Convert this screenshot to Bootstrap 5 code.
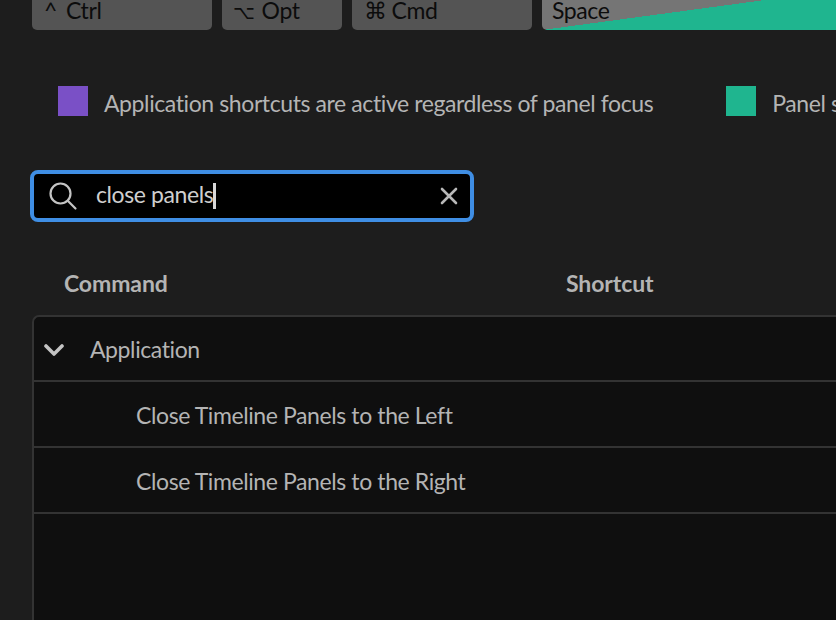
<!DOCTYPE html>
<html lang="en">
<head>
    <meta charset="UTF-8">
    <title>Keyboard Shortcuts</title>
    <link href="https://cdn.jsdelivr.net/npm/bootstrap@5.3.3/dist/css/bootstrap.min.css" rel="stylesheet">
    <style>
        html, body { height: 100%; }
        body {
            background: #1d1d1d;
            color: #b4b4b4;
            font-family: "Lato", "Noto Sans", sans-serif;
            font-size: 23px;
            letter-spacing: -0.4px;
            overflow: hidden;
        }
        .shell { width: 836px; height: 620px; overflow: hidden; }
        .key-row { height: 30px; padding-left: 32px; gap: 10px; }
        .key-cap {
            background: #545454;
            color: #0c0c0c;
            height: 30px;
            border-radius: 0 0 5px 5px;
            padding-left: 12px;
            line-height: 21px;
            flex: none;
            white-space: nowrap;
        }
        .key-sym { display: inline-block; margin-right: 9px; }
        .key-ctrl { width: 180px; }
        .key-opt { width: 120px; }
        .key-opt .key-sym { font-size: 19px; margin-left: -1px; margin-right: 7px; }
        .key-cmd { width: 180px; }
        .key-cmd .key-sym { margin-right: 5px; }
        .key-space {
            width: 320px;
            padding-left: 10px;
            background-color: #1fb58f;
            background-image: linear-gradient(to bottom right, #757575 50%, #1fb58f 50%);
            background-size: 223px 30px;
            background-repeat: no-repeat;
        }
        .legend-row { height: 30px; margin-top: 56px; padding-left: 58px; }
        .swatch { width: 30px; height: 30px; flex: none; }
        .swatch-app { background: #7a50c6; }
        .swatch-panel { background: #1fb58f; }
        .legend-text { margin-left: 16px; white-space: nowrap; line-height: 34px; height: 30px; }
        .legend-gap { margin-left: 73px; }
        .search-box {
            width: 444px;
            height: 52px;
            margin: 54px 0 0 30px;
            background: #000;
            border: 4px solid #3f8ee4;
            border-radius: 8px;
            padding: 0 12px 0 14px;
            color: #cfcfcf;
        }
        .search-val { margin-left: 18px; line-height: 1; flex-grow: 1; }
        .caret-bar { display: inline-block; width: 3px; height: 26px; background: #d8d8d8; vertical-align: -6px; }
        .col-heads { height: 40px; margin-top: 41px; padding-left: 64px; font-weight: 700; color: #b4b4b4; letter-spacing: -0.1px; }
        .head-cmd { width: 502px; }
        .cmd-panel {
            width: 820px;
            height: 320px;
            margin: 12px 0 0 32px;
            background: #0f0f0f;
            border: 2px solid #333;
            border-right: 0;
            border-bottom: 0;
            border-radius: 7px 0 0 0;
        }
        .cmd-row { height: 66px; border-bottom: 2px solid #333; white-space: nowrap; }
        .cmd-group { padding: 2px 0 0 10px; height: 65px; }
        .cmd-group span { margin-left: 26px; }
        .cmd-item { padding-left: 102px; padding-top: 2px; }
    </style>
</head>
<body>
    <div class="shell">
        <div class="d-flex key-row">
            <div class="key-cap key-ctrl"><span class="key-sym">^</span>Ctrl</div>
            <div class="key-cap key-opt"><span class="key-sym">⌥</span>Opt</div>
            <div class="key-cap key-cmd"><span class="key-sym">⌘</span>Cmd</div>
            <div class="key-cap key-space">Space</div>
        </div>

        <div class="d-flex legend-row">
            <div class="swatch swatch-app"></div>
            <div class="legend-text">Application shortcuts are active regardless of panel focus</div>
            <div class="swatch swatch-panel legend-gap"></div>
            <div class="legend-text">Panel shortcuts are active only when the panel has focus</div>
        </div>

        <div class="search-box d-flex align-items-center">
            <svg width="30" height="30" viewBox="0 0 30 30" fill="none" stroke="#c4c4c4" stroke-width="2.2" stroke-linecap="round">
                <circle cx="12.5" cy="12.5" r="10"/>
                <path d="M20 20 L27.5 27.5"/>
            </svg>
            <div class="search-val">close panels<span class="caret-bar"></span></div>
            <svg width="18" height="18" viewBox="0 0 18 18" fill="none" stroke="#b8b8b8" stroke-width="2.6" stroke-linecap="round">
                <path d="M2 2 L16 16 M16 2 L2 16"/>
            </svg>
        </div>

        <div class="d-flex align-items-center col-heads">
            <div class="head-cmd">Command</div>
            <div>Shortcut</div>
        </div>

        <div class="cmd-panel">
            <div class="cmd-row cmd-group d-flex align-items-center">
                <svg width="20" height="14" viewBox="0 0 20 14" fill="none" stroke="#c4c4c4" stroke-width="3.6" stroke-linecap="round" stroke-linejoin="round">
                    <path d="M2 3 L10 11 L18 3"/>
                </svg>
                <span>Application</span>
            </div>
            <div class="cmd-row cmd-item d-flex align-items-center">Close Timeline Panels to the Left</div>
            <div class="cmd-row cmd-item d-flex align-items-center">Close Timeline Panels to the Right</div>
        </div>
    </div>

    <script src="https://cdn.jsdelivr.net/npm/bootstrap@5.3.3/dist/js/bootstrap.bundle.min.js"></script>
</body>
</html>
